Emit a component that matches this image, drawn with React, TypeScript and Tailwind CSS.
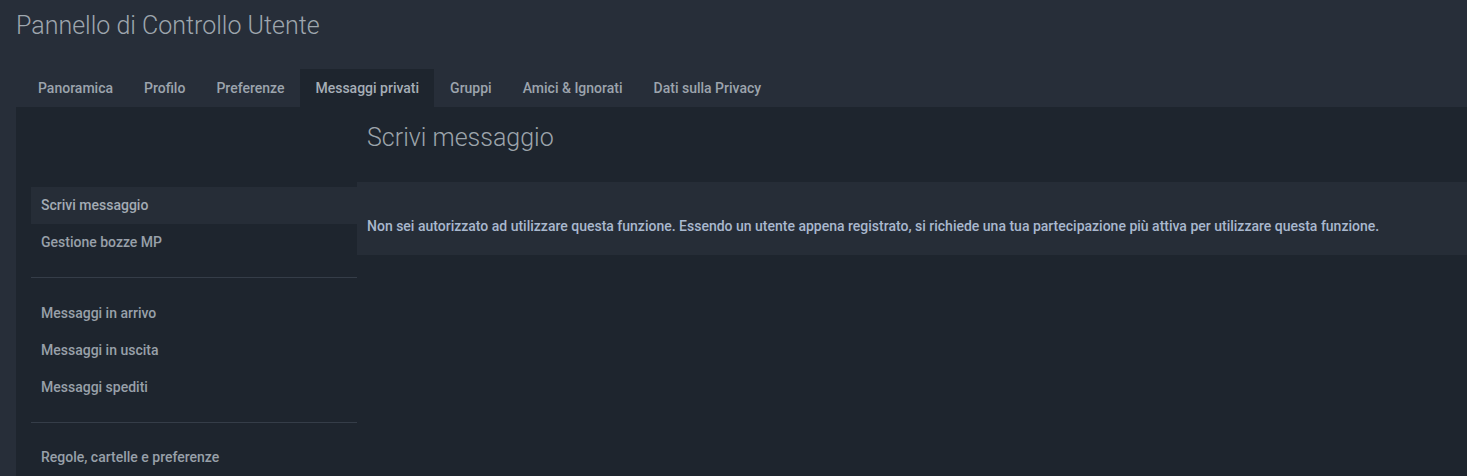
const tabs = ['Panoramica', 'Profilo', 'Preferenze', 'Messaggi privati', 'Gruppi', 'Amici & Ignorati', 'Dati sulla Privacy']

const groups = [
  ['Scrivi messaggio', 'Gestione bozze MP'],
  ['Messaggi in arrivo', 'Messaggi in uscita', 'Messaggi spediti'],
  ['Regole, cartelle e preferenze'],
]

export default function App() {
  return (
    <div className="h-[476px] overflow-hidden bg-[#272e39] font-['Roboto',sans-serif]">
      <div className="h-[69px] pl-4 pt-[10px]">
        <h1 className="text-[25px] font-light leading-[32px] text-[#9ea6ae]">Pannello di Controllo Utente</h1>
      </div>

      <div className="flex h-[38px] pl-[23px]">
        {tabs.map((t) => (
          <div
            key={t}
            className={
              t === 'Messaggi privati'
                ? 'mr-px flex items-center bg-[#1e252e] px-[15px] text-[14px] font-medium text-[#a6aeb7]'
                : 'mr-px flex items-center px-[15px] text-[14px] font-medium text-[#9ca4ad]'
            }
          >
            {t}
          </div>
        ))}
      </div>

      <div className="ml-4 flex h-full bg-[#1e252e]">
        <aside className="w-[341px] shrink-0 pl-[15px] pt-[80px]">
          {groups.map((g, gi) => (
            <div key={gi}>
              {gi > 0 && <div className="mt-4 mb-[16.5px] h-px bg-[#353d48]" />}
              {g.map((item) => (
                <div
                  key={item}
                  className={
                    item === 'Scrivi messaggio'
                      ? 'flex h-[37px] items-center bg-[#262d37] px-[10px] text-[14px] font-medium text-[#a3abb4]'
                      : 'flex h-[37px] items-center px-[10px] text-[14px] font-medium text-[#98a0a9]'
                  }
                >
                  {item}
                </div>
              ))}
            </div>
          ))}
        </aside>

        <main className="flex-1">
          <div className="h-[75px] px-[10px] pt-[15px]">
            <h2 className="text-[25px] font-light leading-[32px] text-[#9ca4ab]">Scrivi messaggio</h2>
          </div>
          <div className="bg-[#262d37] px-[10px] pb-[21px] pt-[36px]">
            <p className="text-[14px] font-medium leading-4 text-[#a9b8ce]">
              Non sei autorizzato ad utilizzare questa funzione. Essendo un utente appena registrato, si richiede una tua partecipazione più attiva per utilizzare questa funzione.
            </p>
          </div>
        </main>
      </div>
    </div>
  )
}
